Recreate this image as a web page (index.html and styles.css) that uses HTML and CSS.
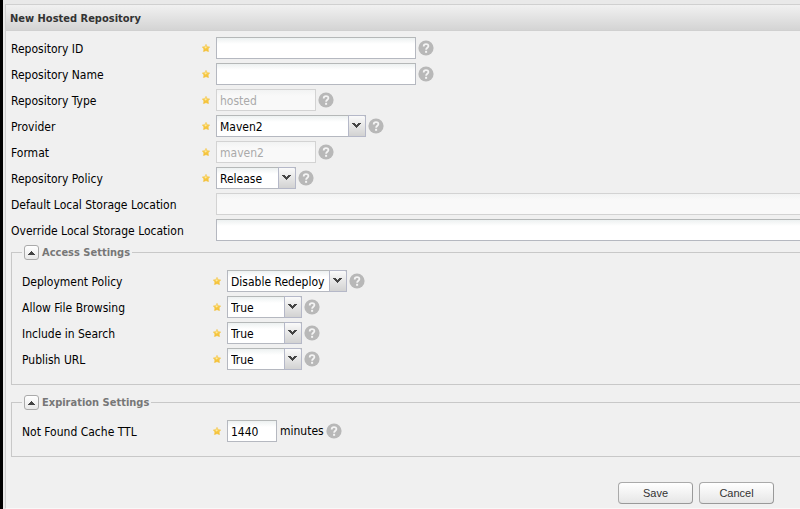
FILE: index.html
```html
<!DOCTYPE html>
<html lang="en">
<head>
<meta charset="utf-8">
<title>New Hosted Repository</title>
<link rel="stylesheet" href="styles.css">
</head>
<body>
<svg class="defs" aria-hidden="true">
  <defs>
    <linearGradient id="gold" x1="0" y1="0" x2="0" y2="1"><stop offset="0" stop-color="#fbd765"/><stop offset="1" stop-color="#f3bd2c"/></linearGradient>
    <symbol id="star" viewBox="0 0 8 8"><path d="M4 0.2 5.2 2.5 7.8 2.9 6.2 4.9 6.6 7.7 4 6.7 1.4 7.7 1.8 4.9 0.2 2.9 2.8 2.5Z" fill="url(#gold)" stroke="#f3c95b" stroke-width=".5"/><path d="M4 2 4.8 3.6 3.3 4.6 2.5 3.4Z" fill="#fdeaa0"/></symbol>
    <symbol id="help" viewBox="0 0 16 16"><circle cx="8" cy="8" r="7.6" fill="#b8b8b8"/><path d="M5.7 6.4C5.7 3.3 10.4 3.4 10.4 6.1 10.4 7.7 8.1 7.8 8.1 9.7" fill="none" stroke="#f4f4f4" stroke-width="1.8"/><rect x="7.1" y="10.8" width="2" height="2" fill="#f4f4f4"/></symbol>
    <symbol id="arrow" viewBox="0 0 9 6"><path d="M0 0H3V1H4V2H5V1H6V0H9V1H8V2H7V3H6V4H5V5H4V4H3V3H2V2H1V1H0Z" fill="#444"/></symbol>
    <symbol id="up" viewBox="0 0 7 4"><path d="M3 0H4V1H5V2H6V3H7V4H0V3H1V2H2V1H3Z" fill="#444"/></symbol>
  </defs>
</svg>
<main class="panel">
  <h1 class="title">New Hosted Repository</h1>
  <form class="form">
    <div class="row"><label for="rid">Repository ID</label><svg class="star"><use href="#star"/></svg><input id="rid" class="long" type="text"><svg class="help"><use href="#help"/></svg></div>
    <div class="row"><label for="rname">Repository Name</label><svg class="star"><use href="#star"/></svg><input id="rname" class="long" type="text"><svg class="help"><use href="#help"/></svg></div>
    <div class="row"><label for="rtype">Repository Type</label><svg class="star"><use href="#star"/></svg><input id="rtype" class="medium" type="text" value="hosted" disabled><svg class="help"><use href="#help"/></svg></div>
    <div class="row"><label for="provider">Provider</label><svg class="star"><use href="#star"/></svg><span class="combo provider"><select id="provider"><option>Maven2</option></select><svg class="arrow"><use href="#arrow"/></svg></span><svg class="help"><use href="#help"/></svg></div>
    <div class="row"><label for="format">Format</label><svg class="star"><use href="#star"/></svg><input id="format" class="medium" type="text" value="maven2" disabled><svg class="help"><use href="#help"/></svg></div>
    <div class="row"><label for="policy">Repository Policy</label><svg class="star"><use href="#star"/></svg><span class="combo policy"><select id="policy"><option>Release</option></select><svg class="arrow"><use href="#arrow"/></svg></span><svg class="help"><use href="#help"/></svg></div>
    <div class="row"><label for="dloc">Default Local Storage Location</label><input id="dloc" class="fill" type="text" disabled></div>
    <div class="row"><label for="oloc">Override Local Storage Location</label><input id="oloc" class="fill" type="text"></div>

    <fieldset>
      <legend><button class="toggle" type="button" aria-label="Collapse"><svg><use href="#up"/></svg></button>Access Settings</legend>
      <div class="row"><label for="deploy">Deployment Policy</label><svg class="star"><use href="#star"/></svg><span class="combo deploy"><select id="deploy"><option>Disable Redeploy</option></select><svg class="arrow"><use href="#arrow"/></svg></span><svg class="help"><use href="#help"/></svg></div>
      <div class="row"><label for="browse">Allow File Browsing</label><svg class="star"><use href="#star"/></svg><span class="combo bool"><select id="browse"><option>True</option></select><svg class="arrow"><use href="#arrow"/></svg></span><svg class="help"><use href="#help"/></svg></div>
      <div class="row"><label for="search">Include in Search</label><svg class="star"><use href="#star"/></svg><span class="combo bool"><select id="search"><option>True</option></select><svg class="arrow"><use href="#arrow"/></svg></span><svg class="help"><use href="#help"/></svg></div>
      <div class="row"><label for="publish">Publish URL</label><svg class="star"><use href="#star"/></svg><span class="combo bool"><select id="publish"><option>True</option></select><svg class="arrow"><use href="#arrow"/></svg></span><svg class="help"><use href="#help"/></svg></div>
    </fieldset>

    <fieldset class="later">
      <legend><button class="toggle" type="button" aria-label="Collapse"><svg><use href="#up"/></svg></button>Expiration Settings</legend>
      <div class="row"><label for="ttl">Not Found Cache TTL</label><svg class="star"><use href="#star"/></svg><input id="ttl" class="short" type="text" value="1440"><span class="unit">minutes</span><svg class="help"><use href="#help"/></svg></div>
    </fieldset>

    <div class="actions"><button type="submit">Save</button><button type="button">Cancel</button></div>
  </form>
</main>
</body>
</html>
```
FILE: styles.css
```css
*, *::after { box-sizing: border-box; }
body {
  margin: 0;
  min-height: 100vh;
  padding-top: 4px;
  border-left: 3px solid #000;
  background: #e9e9e9;
  font: 12px/16px "DejaVu Sans Condensed", Tahoma, sans-serif;
  color: #000;
  overflow: hidden;
}
.defs { position: absolute; width: 0; height: 0; }
.panel {
  margin-left: 2px;
  border-left: 1px solid #d0d0d0;
  border-bottom: 1px solid #f8f8f8;
  background: #f0f0f0;
}
.title {
  margin: 0;
  height: 27px;
  padding: 0 4px;
  border-top: 1px solid #d0d0d0;
  border-bottom: 1px solid #d0d0d0;
  background: linear-gradient(#f1f1f1, #d4d4d4);
  font-size: 11px;
  line-height: 27px;
  font-weight: bold;
  color: #333;
}
.form { padding: 6px 0 4px 5px; }
.row { display: flex; align-items: center; height: 22px; margin-bottom: 4px; }
.row label { flex: 0 0 205px; padding-top: 2px; }
.star { flex: none; width: 8px; height: 8px; margin: 0 6px 0 -14px; }
.help { flex: none; width: 16px; height: 16px; margin-left: 2px; }
input, select {
  height: 22px;
  margin: 0;
  padding: 2px 3px 0;
  border: 1px solid #b5b8c0;
  border-top-color: #b5b8b8;
  border-radius: 0;
  background: linear-gradient(#edf1f1, #fff 6px);
  font: inherit;
  color: #000;
}
input:disabled { border-color: #d3d3d3; background: linear-gradient(#f2f3f3, #f9f9f9 6px); color: #aaa; }
.long { width: 200px; }
.medium { width: 100px; }
.short { width: 50px; }
.fill { flex: 1; min-width: 0; border-right: 0; }
.combo { position: relative; flex: none; }
.combo select { display: block; width: 100%; appearance: none; }
.combo::after {
  content: "";
  position: absolute;
  top: 0;
  right: 0;
  width: 18px;
  height: 22px;
  border: 1px solid #b5b8c8;
  border-radius: 0 2px 0 0;
  background: linear-gradient(#fafafa, #d2d2d2);
  pointer-events: none;
}
.arrow { position: absolute; z-index: 1; top: 8px; right: 5px; width: 9px; height: 6px; pointer-events: none; }
.provider { width: 150px; }
.policy { width: 80px; }
.deploy { width: 120px; }
.bool { width: 75px; }
.unit { margin-left: 3px; }
fieldset { min-width: 0; margin: 0; padding: 10px 0 10px 10px; border: 1px solid #c8c8c8; border-right: 0; }
.later { margin-top: 10px; }
legend {
  display: flex;
  align-items: center;
  height: 15px;
  padding: 0 2px;
  font-size: 11px;
  line-height: 17px;
  font-weight: bold;
  color: #777;
}
.toggle {
  display: flex;
  align-items: center;
  justify-content: center;
  width: 15px;
  height: 15px;
  margin-right: 3px;
  padding: 0;
  border: 1px solid #aaa;
  border-radius: 3px;
  background: linear-gradient(#fff, #e8e8e8);
}
.toggle svg { width: 7px; height: 4px; }
.actions { display: flex; justify-content: flex-end; gap: 6px; margin: 25px 26px 0 0; }
.actions button {
  width: 75px;
  height: 22px;
  padding: 0;
  border: 1px solid #aaa;
  border-right-color: #999;
  border-bottom-color: #999;
  border-radius: 4px;
  background: linear-gradient(#fff, #e6e6e6);
  font: 11px/16px "Liberation Sans", Arial, sans-serif;
  color: #333;
}
```
